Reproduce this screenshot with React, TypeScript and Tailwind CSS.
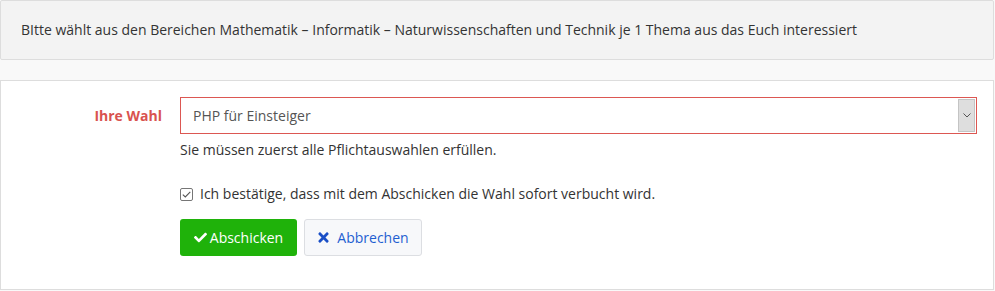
import { FaCheck, FaTimes } from "react-icons/fa";

export default function App() {
    return (
        <div className="w-[995px] h-[291px] bg-[#f9f9f9] text-[14px] text-[#333] overflow-hidden" style={{ fontFamily: '"Open Sans", "Liberation Sans", sans-serif' }}>
            {/* Hinweis oben */}
            <div className="h-[60px] bg-[#f3f3f3] border border-[#dddddd] rounded-[2px] flex items-center px-[20px] mr-[1px]">
                <span className="leading-5">
                    BItte wählt aus den Bereichen Mathematik – Informatik – Naturwissenschaften und Technik je 1 Thema aus das Euch interessiert
                </span>
            </div>

            {/* Formular */}
            <div className="mt-[20px] h-[210px] bg-white border border-[#dddddd] mr-[1px] pt-[16px]">
                <div className="flex items-start">
                    <label className="w-[161px] text-right font-bold text-[#d9534f] leading-[37px]">
                        Ihre Wahl
                    </label>

                    <div className="ml-[18px] w-[797px]">
                        {/* Auswahl */}
                        <div className="h-[37px] border border-[#dc5752] flex items-stretch bg-white">
                            <span className="flex-1 pl-[12px] flex items-center text-[#555]">PHP für Einsteiger</span>
                            <div className="w-[17px] my-px mr-px bg-[#dedede] border border-[#c4c4c4] flex items-center justify-center">
                                <svg width="8" height="5" viewBox="0 0 8 5" fill="none">
                                    <path d="M0.5 0.5 L4 4 L7.5 0.5" stroke="#555" strokeWidth="1" />
                                </svg>
                            </div>
                        </div>

                        <p className="mt-[6px] leading-5">Sie müssen zuerst alle Pflichtauswahlen erfüllen.</p>

                        {/* Bestätigung */}
                        <div className="mt-[24px] flex items-center gap-[7px] leading-5">
                            <span className="w-[13px] h-[13px] border border-[#767676] rounded-[2px] bg-white flex items-center justify-center">
                                <svg width="9" height="7" viewBox="0 0 9 7" fill="none">
                                    <path d="M0.8 3.6 L3.3 6 L8.3 0.8" stroke="#555" strokeWidth="1.1" />
                                </svg>
                            </span>
                            <span>Ich bestätige, dass mit dem Abschicken die Wahl sofort verbucht wird.</span>
                        </div>

                        {/* Buttons */}
                        <div className="mt-[15px] flex gap-[7px]">
                            <button className="h-[37px] w-[117px] rounded-[3px] bg-[#1fb20a] text-white flex items-center justify-center gap-[3px]">
                                <FaCheck className="w-[13px] h-[13px]" />
                                Abschicken
                            </button>
                            <button className="h-[37px] w-[118px] rounded-[3px] bg-[#f7f8fa] border border-[#dcdee2] text-[#1f5fd1] flex items-center justify-center gap-[7px]">
                                <FaTimes className="w-[13px] h-[15px] text-[#1a4fc6]" />
                                Abbrechen
                            </button>
                        </div>
                    </div>
                </div>
            </div>
        </div>
    );
}
